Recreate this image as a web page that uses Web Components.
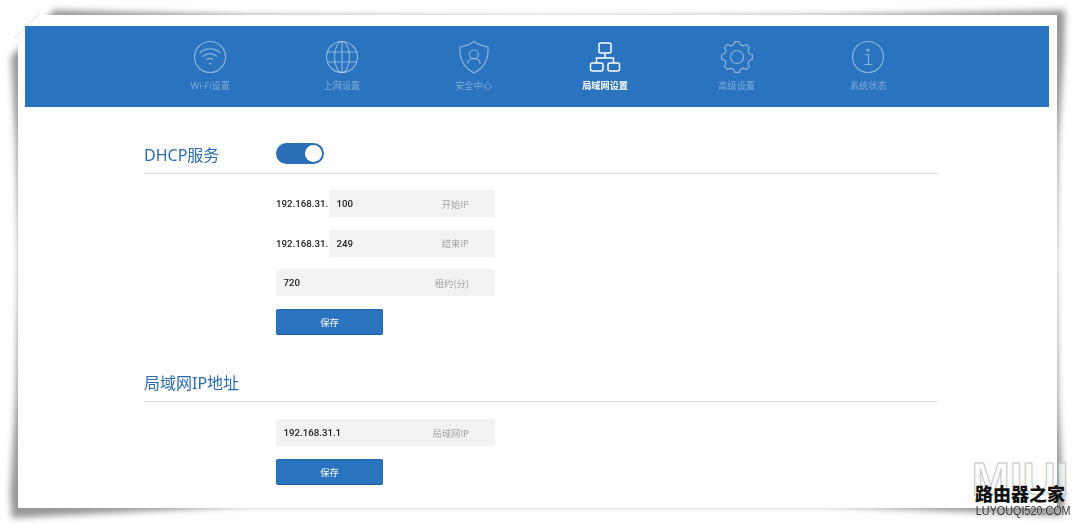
<!DOCTYPE html>
<html>
<head>
<meta charset="utf-8">
<style>
html { background: #fff; overflow: hidden; }
body { margin: 0; font-family: "Noto Sans", "Noto Sans CJK SC", sans-serif; width: 1076px; height: 524px; }
</style>
</head>
<body>
<router-frame>
   <nav-bar>
      <nav-item label="Wi-Fi设置">
         <svg viewBox="0 0 34 34"><circle cx="17" cy="17" r="15.500"/><path d="M6.500 13C12 7.500 22 7.500 27.500 13M10 16.500c4-3.800 10-3.800 14 0M13.500 19.800c2-1.500 5-1.500 7 0"/><circle cx="17" cy="23.500" r=".5"/></svg>
      </nav-item>
      <nav-item label="上网设置">
         <svg viewBox="0 0 34 34"><circle cx="17" cy="17" r="15.500"/><ellipse cx="17" cy="17" rx="7.500" ry="15.500"/><path d="M17 1.500v31M2.500 12h29M2.500 22h29"/></svg>
      </nav-item>
      <nav-item label="安全中心">
         <svg viewBox="0 0 34 34"><path d="M17 1.500c4 3 8.500 4.800 14 5.300.8 11.700-3 20.700-14 26.200C6 27.500 2.200 18.500 3 6.800c5.500-.5 10-2.300 14-5.300z"/><circle cx="17" cy="14.500" r="4.500"/><path d="M10.800 24c0-3.800 2.500-5.500 6.200-5.500s6.200 1.700 6.200 5.500"/></svg>
      </nav-item>
      <nav-item label="局域网设置" active>
         <svg viewBox="0 0 34 34"><rect x="11" y="3" width="12" height="10" rx="2"/><rect x="2.500" y="23" width="12.500" height="8" rx="2"/><rect x="20" y="23" width="11.500" height="8" rx="2"/><path d="M17 13v5M8.500 23v-5h17v5"/></svg>
      </nav-item>
      <nav-item label="高级设置">
         <svg viewBox="0 0 34 34"><path id="gear" stroke-linejoin="round"/><circle cx="17" cy="17" r="6.500"/></svg>
      </nav-item>
      <nav-item label="系统状态">
         <svg viewBox="0 0 34 34"><circle cx="17" cy="17" r="15.500"/><circle cx="17" cy="10" r="1"/><path d="M14 14.500h3.500v10M13.500 24.500h8"/></svg>
      </nav-item>
   </nav-bar>
   <settings-section title="DHCP服务" toggle>
      <ip-field prefix="192.168.31." value="100" hint="开始IP"></ip-field>
      <ip-field prefix="192.168.31." value="249" hint="结束IP"></ip-field>
      <ip-field value="720" hint="租约(分)"></ip-field>
      <save-button>保存</save-button>
   </settings-section>
   <settings-section title="局域网IP地址">
      <ip-field value="192.168.31.1" hint="局域网IP"></ip-field>
      <save-button>保存</save-button>
   </settings-section>
</router-frame>
<site-mark></site-mark>
<script>
// 8 teeth, one pointing up
function gearPath() {
   const pts = [];
   for (let k = 0; k < 8; k++) {
      [[12.8, -15], [15.6, -8], [15.6, 8], [12.8, 15]].forEach(([r, off]) => {
         const a = (k * 45 + off) * Math.PI / 180;
         pts.push((17 + r * Math.sin(a)).toFixed(2) + ' ' + (17 - r * Math.cos(a)).toFixed(2));
      });
   }
   return 'M' + pts.join('L') + 'Z';
}
document.getElementById('gear').setAttribute('d', gearPath());

class routerFrame extends HTMLElement {
   constructor() {
      super();
      this.attachShadow({mode: 'open'});
      this.shadowRoot.innerHTML = `
      <style>
         :host{
            display:block;
            box-sizing:border-box;
            position:relative;
            width:1039px;
            height:493px;
            margin:15px 0 0 18px;
            padding:11px 8px 0 7px;
            background:#fff;
         }
         .shadow{
            position:absolute;
            inset:-20px;
            z-index:-1;
            filter:blur(3px);
         }
         .shadow div{
            width:100%;
            height:100%;
            background:#989898;
            /* page curl: wide at the corners, pinched in the middle of each side */
            clip-path:polygon(
               56px 15px, 250px 20px, 540px 22px, 830px 20px, 1067px 15px,
               1066px 60px, 1060px 150px, 1058px 266px, 1060px 400px, 1066px 510px,
               1064px 521px, 830px 511px, 540px 511px, 250px 511px, 14px 523px,
               12px 500px, 18px 400px, 21px 266px, 18px 150px, 13px 62px);
         }
         .fold{
            position:absolute;
            left:-9px;
            top:10px;
            width:36px;
            height:1px;
            background:#e6e6e6;
            transform:rotate(-45deg);
         }
      </style>
      <div class="shadow"><div></div></div>
      <div class="fold"></div>
      <slot></slot>`;
   }
}
customElements.define('router-frame', routerFrame);

class navBar extends HTMLElement {
   constructor() {
      super();
      this.attachShadow({mode: 'open'});
      this.shadowRoot.innerHTML = `
      <style>
         :host{
            display:flex;
            position:relative;
            justify-content:center;
            height:81px;
            padding-left:4.600px;
            background:#2a73be;
            filter:blur(.3px);
         }
      </style>
      <slot></slot>`;
   }
}
customElements.define('nav-bar', navBar);

class navItem extends HTMLElement {
   constructor() {
      super();
      this.attachShadow({mode: 'open'});
      this.shadowRoot.innerHTML = `
      <style>
         :host{
            display:flex;
            flex-direction:column;
            align-items:center;
            width:131.600px;
            padding-top:14px;
            color:rgba(255,255,255,.38);
            font-size:9.200px;
            line-height:14px;
         }
         :host([active]){
            color:#fff;
            font-weight:700;
         }
         ::slotted(svg){
            width:34px;
            height:34px;
            margin-bottom:5px;
            fill:none;
            stroke:rgba(255,255,255,.45);
            stroke-width:1.200;
         }
         :host([active]) ::slotted(svg){
            stroke:#fff;
            stroke-width:1.500;
         }
      </style>
      <slot></slot>
      <span>${this.getAttribute('label')}</span>`;
   }
}
customElements.define('nav-item', navItem);

class settingsSection extends HTMLElement {
   constructor() {
      super();
      this.attachShadow({mode: 'open'});
      const toggle = this.hasAttribute('toggle') ? '<toggle-switch></toggle-switch>' : '';
      this.shadowRoot.innerHTML = `
      <style>
         :host{
            display:block;
            width:794px;
            margin:36px 0 0 119px;
            filter:blur(.3px);
         }
         :host(:last-child){
            margin-top:36.500px;
         }
         .head{
            display:flex;
            align-items:center;
            height:30px;
            border-bottom:1px solid #dcdcdc;
            color:#2a6db0;
            font-size:16px;
         }
         h2{
            width:132px;
            margin:0 0 8px;
            font-size:inherit;
            font-weight:400;
         }
         .rows{
            display:flex;
            flex-direction:column;
            align-items:flex-start;
            gap:12.500px;
            padding:16px 0 0 132px;
         }
         :host(:last-child) .rows{
            padding-top:17px;
         }
      </style>
      <div class="head"><h2>${this.getAttribute('title')}</h2>${toggle}</div>
      <div class="rows"><slot></slot></div>`;
   }
}
customElements.define('settings-section', settingsSection);

class toggleSwitch extends HTMLElement {
   constructor() {
      super();
      this.attachShadow({mode: 'open'});
      this.shadowRoot.innerHTML = `
      <style>
         :host{
            display:flex;
            justify-content:flex-end;
            align-items:center;
            box-sizing:border-box;
            width:48px;
            height:21px;
            margin-bottom:9px;
            padding-right:2px;
            border-radius:11px;
            background:#2a6fb8;
         }
         i{
            width:17px;
            height:17px;
            border-radius:50%;
            background:#fff;
         }
      </style>
      <i></i>`;
   }
}
customElements.define('toggle-switch', toggleSwitch);

class ipField extends HTMLElement {
   constructor() {
      super();
      this.attachShadow({mode: 'open'});
      const prefix = this.getAttribute('prefix');
      this.shadowRoot.innerHTML = `
      <style>
         :host{
            display:flex;
            align-items:center;
            width:219px;
            height:27px;
            color:#222;
            font:500 9.700px Roboto, "Noto Sans CJK SC", sans-serif;
         }
         .prefix{
            width:53px;
            white-space:nowrap;
         }
         .box{
            flex:1;
            display:flex;
            justify-content:space-between;
            align-items:center;
            height:100%;
            padding:0 26px 0 7.500px;
            border-radius:2px;
            background:#f2f2f2;
         }
         .hint{
            color:#a5a5a5;
            font:400 9.300px "Noto Sans CJK SC", sans-serif;
         }
      </style>
      ${prefix ? `<span class="prefix">${prefix}</span>` : ''}
      <div class="box"><span>${this.getAttribute('value')}</span><span class="hint">${this.getAttribute('hint')}</span></div>`;
   }
}
customElements.define('ip-field', ipField);

class saveButton extends HTMLElement {
   constructor() {
      super();
      this.attachShadow({mode: 'open'});
      this.shadowRoot.innerHTML = `
      <style>
         :host{
            display:flex;
            justify-content:center;
            align-items:center;
            box-sizing:border-box;
            width:107px;
            height:26px;
            border-radius:2px;
            border:1px solid #2468ae;
            border-bottom-color:#1d5c9c;
            background:#2a73be;
            color:#fff;
            font-size:9.300px;
         }
      </style>
      <slot></slot>`;
   }
}
customElements.define('save-button', saveButton);

class siteMark extends HTMLElement {
   constructor() {
      super();
      this.attachShadow({mode: 'open'});
      this.shadowRoot.innerHTML = `
      <style>
         :host{
            display:block;
            position:absolute;
            left:968px;
            top:456px;
            width:104px;
            height:64px;
            text-align:center;
            white-space:nowrap;
         }
         div{ position:absolute; left:0; width:104px; }
         .miui{
            top:-2px;
            color:rgba(255,255,255,.6);
            -webkit-text-stroke:1px #c4c4c4;
            font:700 46px/50px "Liberation Sans", sans-serif;
         }
         .cn{
            top:27px;
            color:#111;
            font:900 18px/21px "Noto Sans CJK SC", sans-serif;
         }
         .url{
            top:48px;
            left:-1px;
            color:#3a3a3a;
            font:400 13px/13px "Liberation Sans", sans-serif;
            transform:scaleX(.83);
         }
      </style>
      <div class="miui">MIUI</div>
      <div class="cn">路由器之家</div>
      <div class="url">LUYOUQI520.COM</div>`;
   }
}
customElements.define('site-mark', siteMark);
</script>
</body>
</html>
